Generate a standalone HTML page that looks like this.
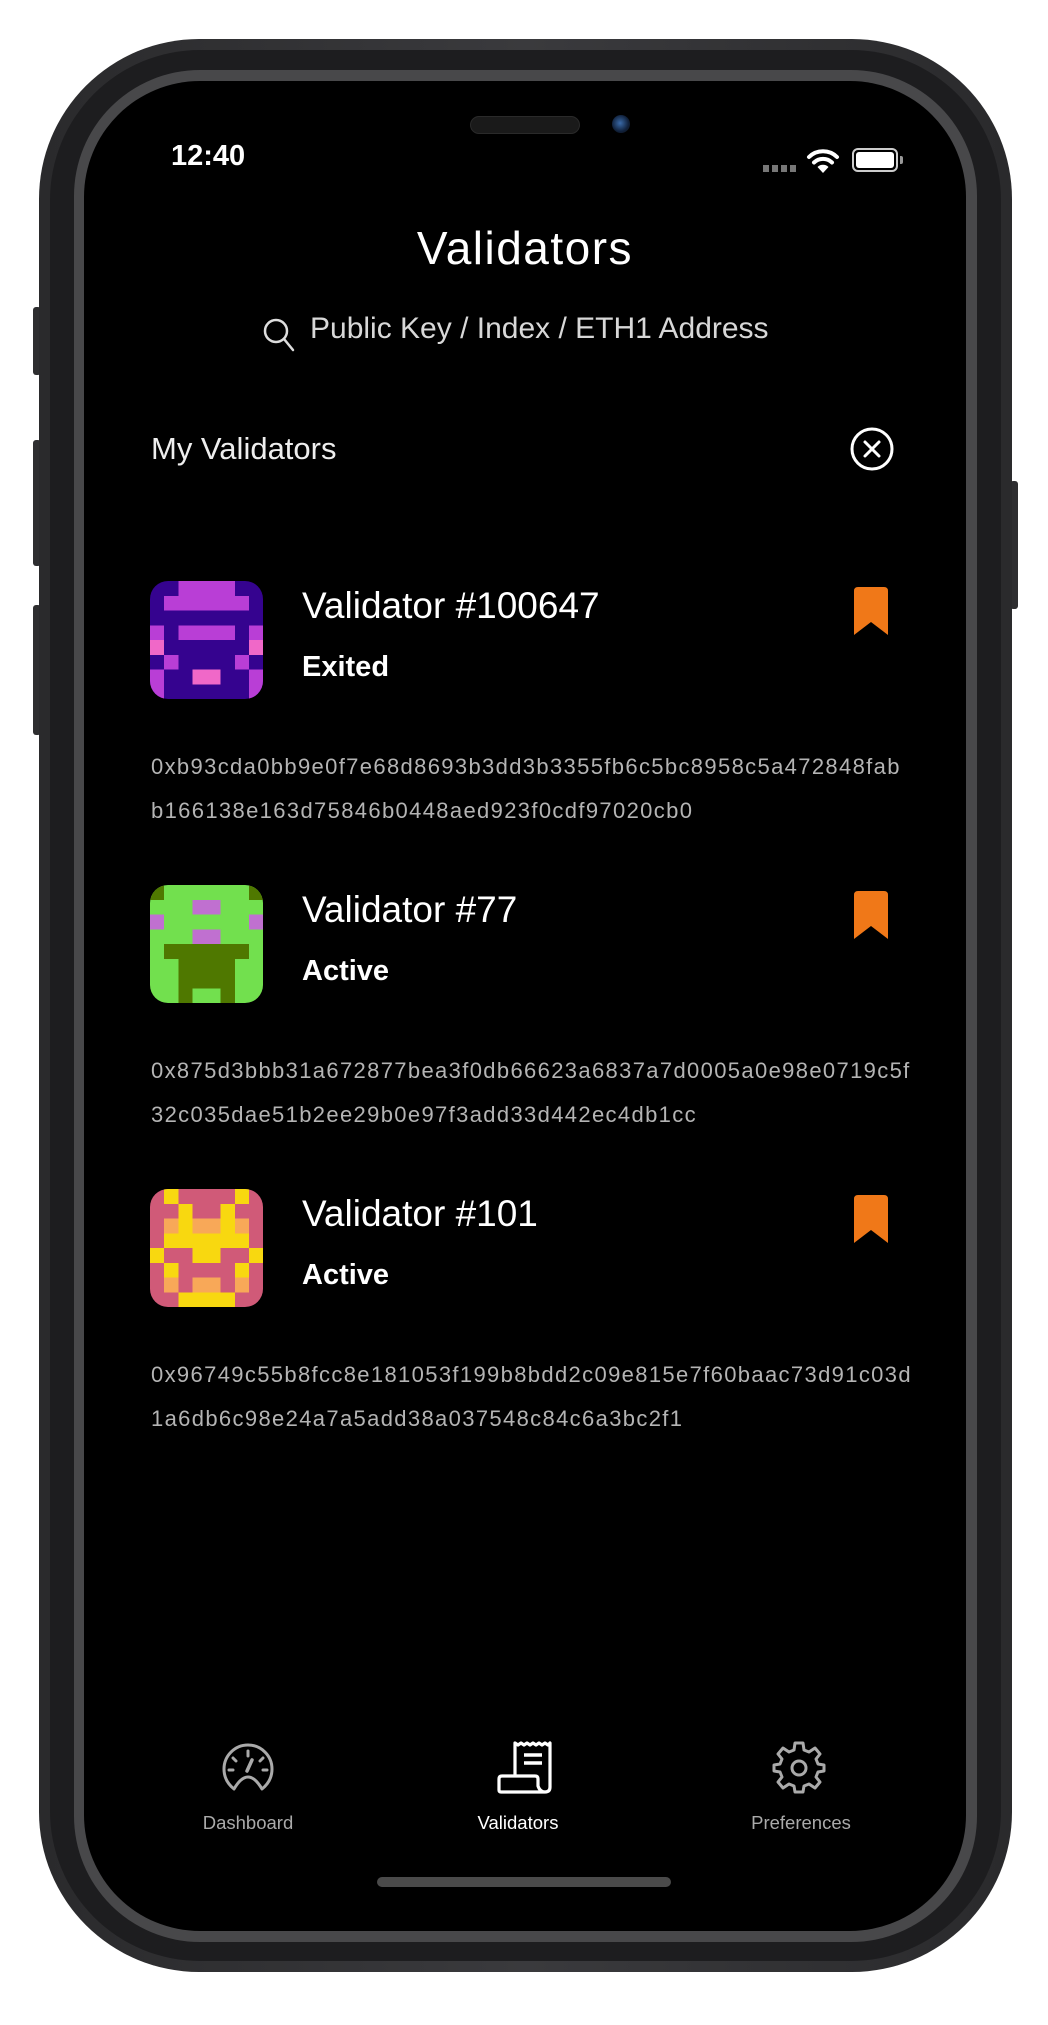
<!DOCTYPE html>
<html><head><meta charset="utf-8"><style>
*{margin:0;padding:0;box-sizing:border-box}
body{width:1048px;height:2025px;background:#fff;position:relative;overflow:hidden;font-family:"Liberation Sans",sans-serif}
.abs{position:absolute}
.body{left:39px;top:39px;width:973px;height:1933px;border-radius:160px;background:linear-gradient(90deg,#2a2a2c,#3a3a3d 50%,#2a2a2c)}
.ring1{left:50px;top:50px;width:951px;height:1911px;border-radius:150px;background:#1d1d1f}
.ring2{left:74px;top:70px;width:903px;height:1872px;border-radius:126px;background:#48484a}
.screen{left:84px;top:81px;width:882px;height:1850px;border-radius:116px;background:#000;overflow:hidden}
.btn{background:#2e2e30;border-radius:3px}
.t{color:#fff;white-space:nowrap}
.hash{color:#b4b4b4;font-size:22px;left:67px;line-height:44px;letter-spacing:1.35px}
.av{left:66px;width:113px;height:118px;border-radius:18px;overflow:hidden}
.bm{left:770px}
.nm{left:218px;font-size:37px}
.st{left:218px;font-size:29px;font-weight:bold}
</style></head><body>
<div class="abs btn" style="left:33px;top:307px;width:8px;height:68px"></div>
<div class="abs btn" style="left:33px;top:440px;width:8px;height:126px"></div>
<div class="abs btn" style="left:33px;top:605px;width:8px;height:130px"></div>
<div class="abs btn" style="left:1010px;top:481px;width:8px;height:128px"></div>
<div class="abs body"></div>
<div class="abs ring1"></div>
<div class="abs ring2"></div>
<div class="abs screen">
  <div class="abs" style="left:386px;top:35px;width:110px;height:18px;border-radius:9px;background:#1a1a1a;border:1px solid #2a2a2a"></div>
  <div class="abs" style="left:528px;top:34px;width:18px;height:18px;border-radius:50%;background:radial-gradient(circle at 45% 45%,#3a6aa8,#10203a 60%,#111)"></div>
  <div class="abs t" style="left:87px;top:59px;font-size:29px;font-weight:bold">12:40</div>
  <div class="abs" style="left:679px;top:84px;width:36px;height:7px;background:repeating-linear-gradient(90deg,#777 0 6px,transparent 6px 9px)"></div>
  <svg class="abs" style="left:722px;top:66px" width="34" height="28" viewBox="0 0 34 28"><path d="M3 10 A20 20 0 0 1 31 10" stroke="#fff" stroke-width="4" fill="none" stroke-linecap="round"/><path d="M8 15.5 A13 13 0 0 1 26 15.5" stroke="#fff" stroke-width="4" fill="none" stroke-linecap="round"/><path d="M17 26 L11.5 20 A8 8 0 0 1 22.5 20 Z" fill="#fff"/></svg>
  <div class="abs" style="left:768px;top:67px;width:46px;height:24px;border:2px solid #ccc;border-radius:6px;padding:2px"><div style="width:100%;height:100%;background:#fff;border-radius:3px"></div></div>
  <div class="abs" style="left:816px;top:75px;width:3px;height:8px;background:#999;border-radius:0 2px 2px 0"></div>

  <div class="abs t" style="left:0;width:882px;text-align:center;top:140px;font-size:46px;letter-spacing:1.5px">Validators</div>
  <svg class="abs" style="left:178px;top:236px" width="34" height="36" viewBox="0 0 34 36"><circle cx="14" cy="14" r="11" stroke="#ddd" stroke-width="2.5" fill="none"/><path d="M22 22 L31 33" stroke="#ddd" stroke-width="2.5" stroke-linecap="round"/></svg>
  <div class="abs t" style="left:226px;top:231px;font-size:30px;color:#d8d8d8">Public Key / Index / ETH1 Address</div>

  <div class="abs t" style="left:67px;top:350px;font-size:31px;color:#eee">My Validators</div>
  <svg class="abs" style="left:765px;top:345px" width="46" height="46" viewBox="0 0 46 46"><circle cx="23" cy="23" r="20" stroke="#fff" stroke-width="3" fill="none"/><path d="M16 16 L30 30 M30 16 L16 30" stroke="#fff" stroke-width="3" stroke-linecap="round"/></svg>

  <!-- item 1 -->
  <svg class="abs av" style="top:500px" viewBox="0 0 8 8" preserveAspectRatio="none" shape-rendering="crispEdges">
    <rect width="8" height="8" fill="#35038f"/>
    <g fill="#b93ed6"><rect x="2" y="0" width="4" height="1"/><rect x="1" y="1" width="6" height="1"/><rect x="0" y="3" width="1" height="1"/><rect x="2" y="3" width="4" height="1"/><rect x="7" y="3" width="1" height="1"/><rect x="1" y="5" width="1" height="1"/><rect x="6" y="5" width="1" height="1"/><rect x="0" y="6" width="1" height="2"/><rect x="7" y="6" width="1" height="2"/></g>
    <g fill="#f068c8"><rect x="0" y="4" width="1" height="1"/><rect x="7" y="4" width="1" height="1"/><rect x="3" y="6" width="2" height="1"/></g>
  </svg>
  <div class="abs t nm" style="top:504px">Validator #100647</div>
  <div class="abs t st" style="top:570px">Exited</div>
  <svg class="abs bm" style="top:506px" width="34" height="49" viewBox="0 0 34 49"><path d="M0 4 Q0 0 4 0 H30 Q34 0 34 4 V48 L17 35 L0 48 Z" fill="#f07818"/></svg>
  <div class="abs t hash" style="top:664px">0xb93cda0bb9e0f7e68d8693b3dd3b3355fb6c5bc8958c5a472848fab<br>b166138e163d75846b0448aed923f0cdf97020cb0</div>

  <!-- item 2 -->
  <svg class="abs av" style="top:804px" viewBox="0 0 8 8" preserveAspectRatio="none" shape-rendering="crispEdges">
    <rect width="8" height="8" fill="#72e04e"/>
    <g fill="#4f7800"><rect x="0" y="0" width="1" height="1"/><rect x="7" y="0" width="1" height="1"/><rect x="1" y="4" width="6" height="1"/><rect x="2" y="5" width="4" height="2"/><rect x="2" y="7" width="1" height="1"/><rect x="5" y="7" width="1" height="1"/></g>
    <g fill="#c070d0"><rect x="3" y="1" width="2" height="1"/><rect x="0" y="2" width="1" height="1"/><rect x="7" y="2" width="1" height="1"/><rect x="3" y="3" width="2" height="1"/></g>
  </svg>
  <div class="abs t nm" style="top:808px">Validator #77</div>
  <div class="abs t st" style="top:874px">Active</div>
  <svg class="abs bm" style="top:810px" width="34" height="49" viewBox="0 0 34 49"><path d="M0 4 Q0 0 4 0 H30 Q34 0 34 4 V48 L17 35 L0 48 Z" fill="#f07818"/></svg>
  <div class="abs t hash" style="top:968px">0x875d3bbb31a672877bea3f0db66623a6837a7d0005a0e98e0719c5f<br>32c035dae51b2ee29b0e97f3add33d442ec4db1cc</div>

  <!-- item 3 -->
  <svg class="abs av" style="top:1108px" viewBox="0 0 8 8" preserveAspectRatio="none" shape-rendering="crispEdges">
    <rect width="8" height="8" fill="#d05a78"/>
    <g fill="#f8d810"><rect x="1" y="0" width="1" height="1"/><rect x="6" y="0" width="1" height="1"/><rect x="2" y="1" width="1" height="2"/><rect x="5" y="1" width="1" height="2"/><rect x="1" y="3" width="6" height="1"/><rect x="0" y="4" width="1" height="1"/><rect x="3" y="4" width="2" height="1"/><rect x="7" y="4" width="1" height="1"/><rect x="1" y="5" width="1" height="1"/><rect x="6" y="5" width="1" height="1"/><rect x="2" y="7" width="4" height="1"/></g>
    <g fill="#f8a858"><rect x="1" y="2" width="1" height="1"/><rect x="3" y="2" width="2" height="1"/><rect x="6" y="2" width="1" height="1"/><rect x="1" y="6" width="1" height="1"/><rect x="3" y="6" width="2" height="1"/><rect x="6" y="6" width="1" height="1"/></g>
  </svg>
  <div class="abs t nm" style="top:1112px">Validator #101</div>
  <div class="abs t st" style="top:1178px">Active</div>
  <svg class="abs bm" style="top:1114px" width="34" height="49" viewBox="0 0 34 49"><path d="M0 4 Q0 0 4 0 H30 Q34 0 34 4 V48 L17 35 L0 48 Z" fill="#f07818"/></svg>
  <div class="abs t hash" style="top:1272px">0x96749c55b8fcc8e181053f199b8bdd2c09e815e7f60baac73d91c03d<br>1a6db6c98e24a7a5add38a037548c84c6a3bc2f1</div>

  <!-- tab bar -->
  <svg class="abs" style="left:136px;top:1660px" width="56" height="52" viewBox="0 0 56 52"><path d="M14 48 Q4 40 4 28 A24 24 0 0 1 52 28 Q52 40 42 48 Q35 36 28 36 Q21 36 14 48 Z" stroke="#aaa" stroke-width="3" fill="none" stroke-linejoin="round"/><path d="M28 10 V15 M13 17 L16 20 M43 17 L40 20 M9 29 H13 M43 29 H47" stroke="#aaa" stroke-width="3" stroke-linecap="round"/><path d="M27 30 L32 19" stroke="#aaa" stroke-width="3.5" stroke-linecap="round"/></svg>
  <div class="abs t" style="left:64px;width:200px;text-align:center;top:1731px;font-size:18.5px;color:#aaa">Dashboard</div>
  <svg class="abs" style="left:413px;top:1660px" width="56" height="54" viewBox="0 0 56 54"><path d="M18 34 V2 L21 4 L24 2 L27 4 L30 2 L33 4 L36 2 L39 4 L42 2 L45 4 L48 2 L51 4 L53 2 V46 Q53 51 48 51 Q43 51 41 45 V38 Q41 35 38 35 H5 Q2 35 2 38 V49 Q2 51 4 51 H48" stroke="#fff" stroke-width="3.2" fill="none" stroke-linejoin="round"/><path d="M27 14 H45 M27 22 H45" stroke="#fff" stroke-width="3.5"/></svg>
  <div class="abs t" style="left:334px;width:200px;text-align:center;top:1731px;font-size:18.5px">Validators</div>
  <svg class="abs" style="left:688px;top:1659px" width="54" height="54" viewBox="0 0 54 54"><path d="M23 3 H31 L32 10 L37 12 L43 8 L48 14 L44 19 L46 24 L52 25 V31 L46 32 L44 37 L48 42 L43 48 L37 44 L32 46 L31 52 H23 L22 46 L17 44 L11 48 L6 42 L10 37 L8 32 L2 31 V25 L8 24 L10 19 L6 14 L11 8 L17 12 L22 10 Z" stroke="#aaa" stroke-width="3" fill="none" stroke-linejoin="round"/><circle cx="27" cy="28" r="7" stroke="#aaa" stroke-width="3" fill="none"/></svg>
  <div class="abs t" style="left:617px;width:200px;text-align:center;top:1731px;font-size:18.5px;color:#aaa">Preferences</div>

  <div class="abs" style="left:293px;top:1796px;width:294px;height:10px;border-radius:5px;background:#4a4a4a"></div>
</div>
</body></html>
